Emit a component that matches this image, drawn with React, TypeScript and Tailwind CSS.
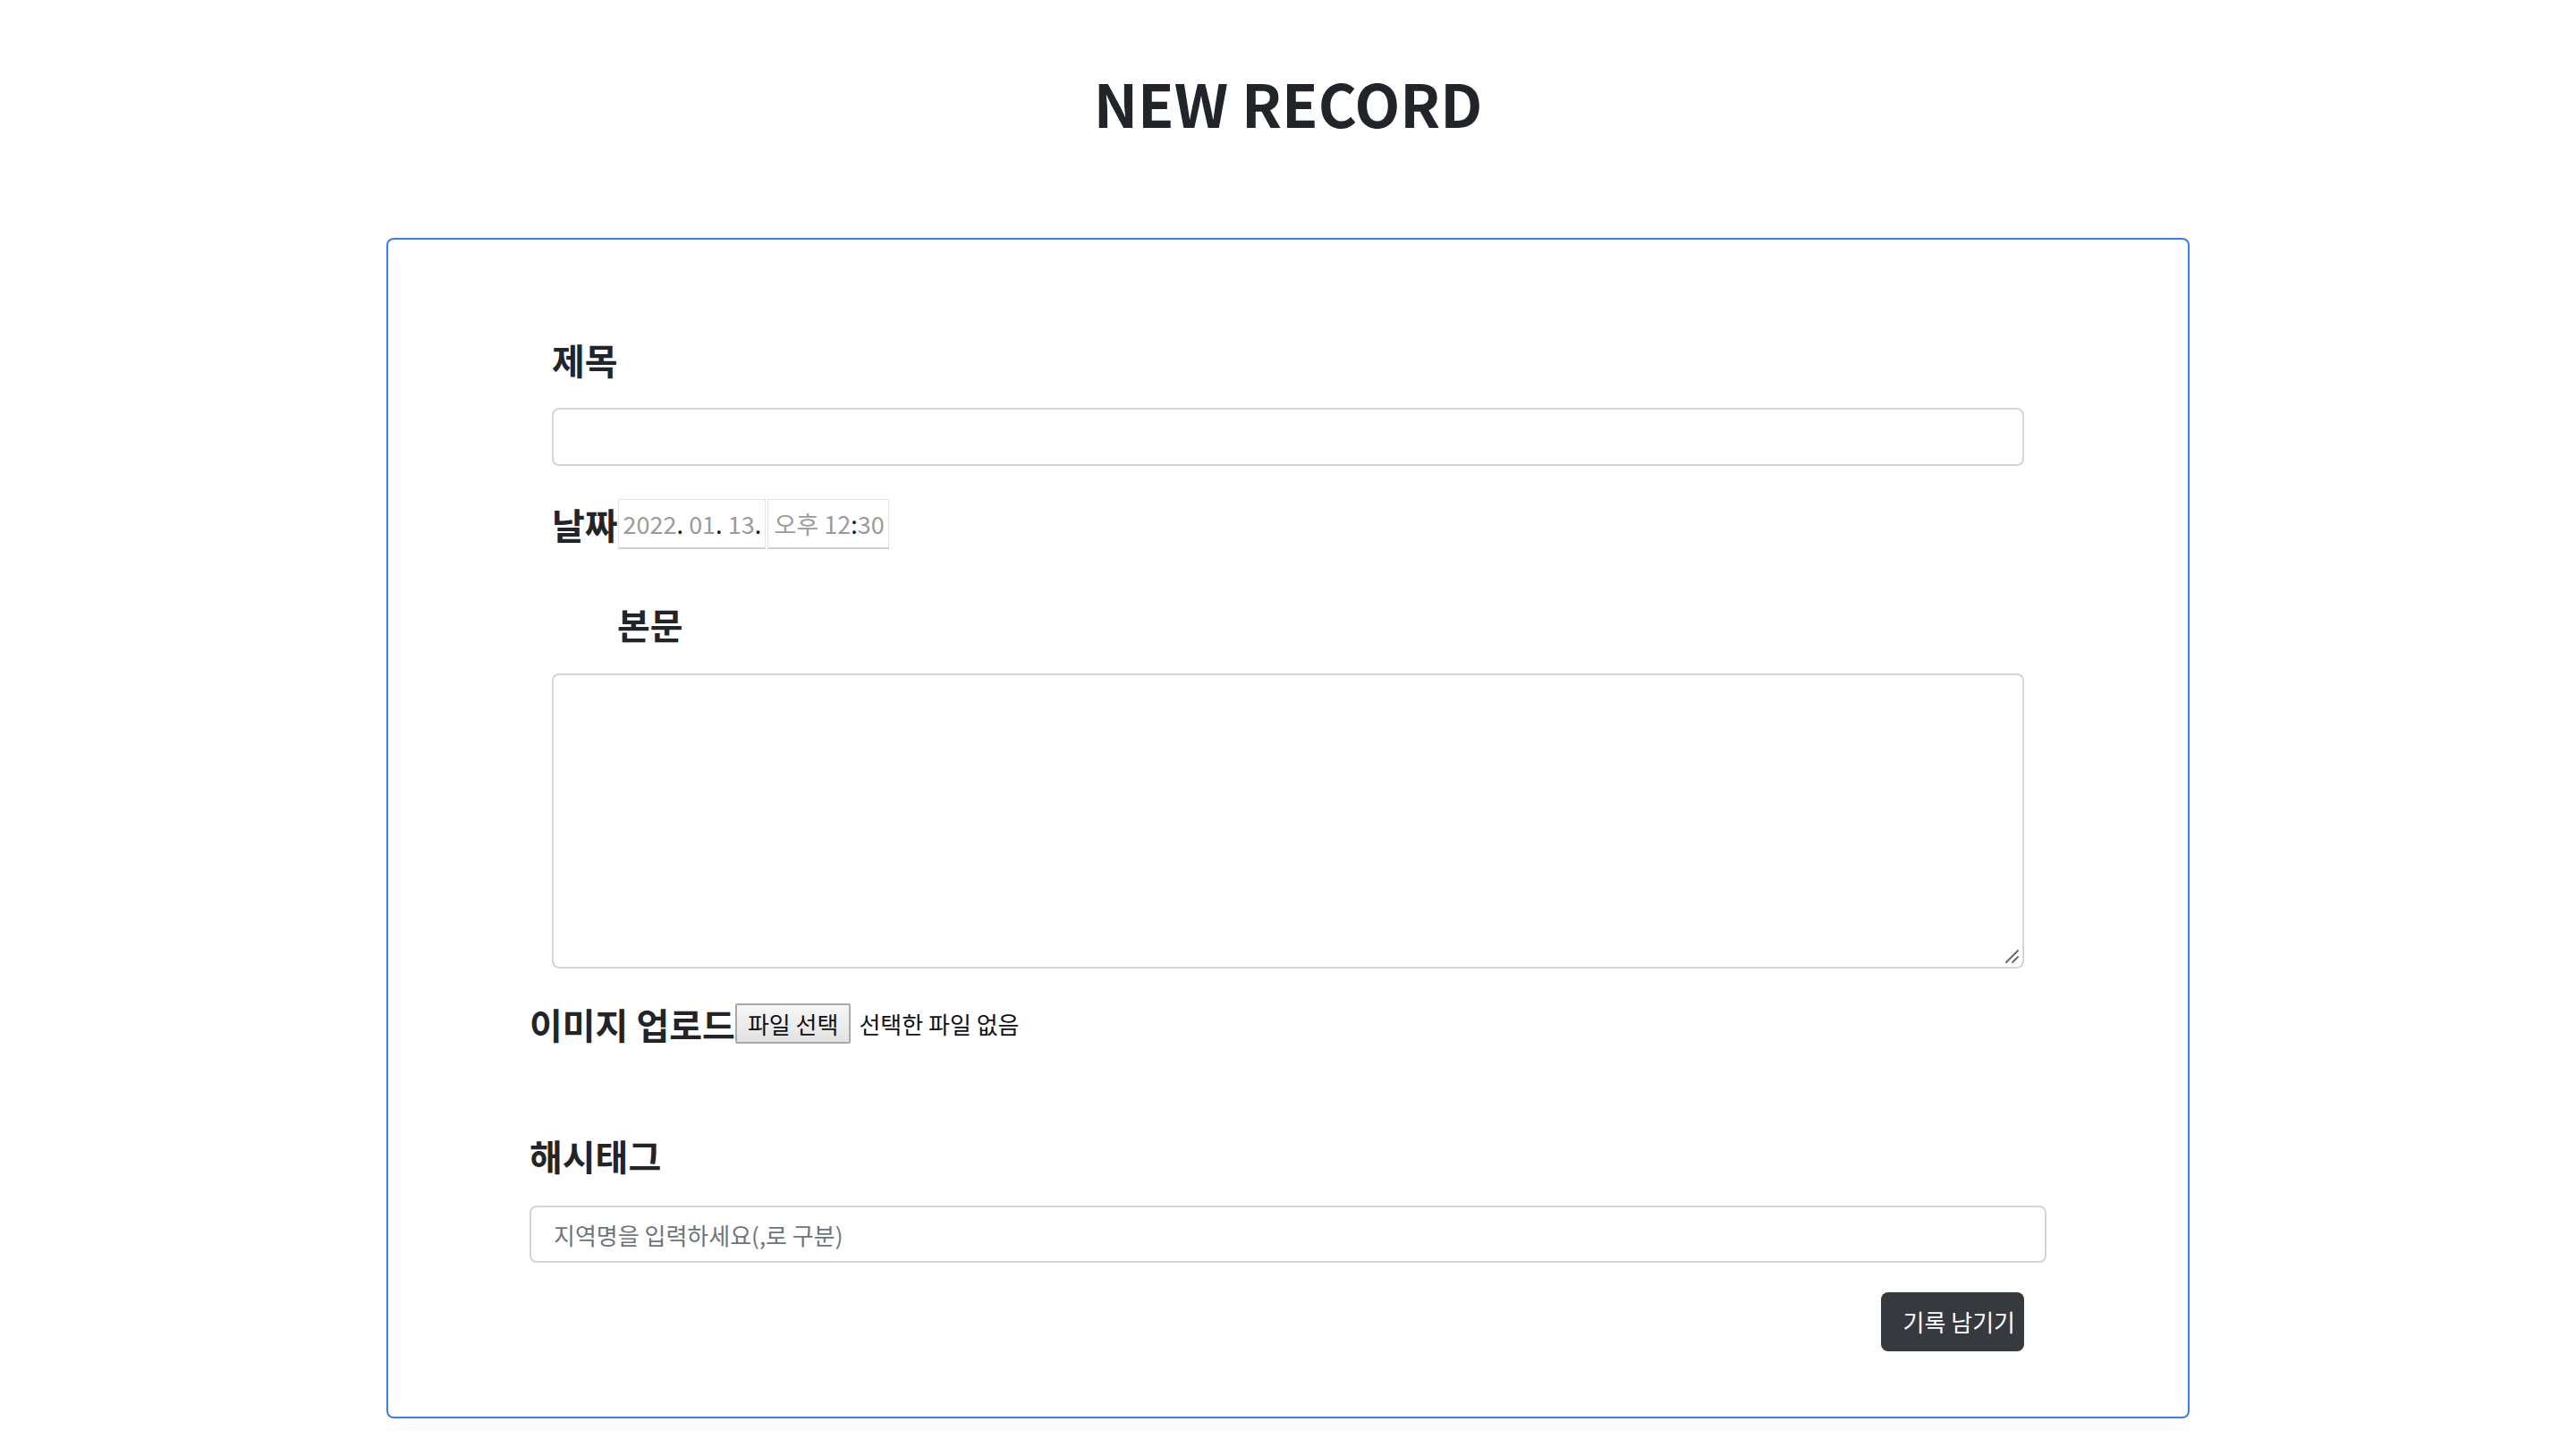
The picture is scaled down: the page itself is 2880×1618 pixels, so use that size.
export default function App() {
  return (
    <div className="min-h-screen bg-white font-['Noto_Sans_CJK_KR','Noto_Sans',sans-serif] text-[#212529]">
      <div className="pt-[81px] text-center">
        <h1 className="text-[66px] font-bold leading-none">NEW RECORD</h1>
      </div>
      <div className="mx-auto mt-[119px] w-[2016px] rounded-[8px] border-2 border-[#3b7cf3] px-[183px] pt-[114px] pb-[73px]">
        <div className="text-[40px] font-bold leading-none">제목</div>
        <input
          type="text"
          className="mt-[34px] block h-[65px] w-full rounded-[8px] border-2 border-[#d2d6db] bg-white px-[24px] text-[26px] outline-none"
        />
        <div className="mt-[37px] flex items-center">
          <span className="text-[40px] font-bold leading-none">날짜</span>
          <div className="flex gap-[2px]">
            <div className="flex h-[56px] w-[165px] items-center border border-[#e4e4e4] border-b-2 border-b-[#cfcfcf] pl-[5px] text-[27px] leading-none text-[#9b9b9b]">
              <span>2022</span>
              <span className="text-[#111]">.</span>
              <span>&nbsp;01</span>
              <span className="text-[#111]">.</span>
              <span>&nbsp;13</span>
              <span className="text-[#111]">.</span>
            </div>
            <div className="flex h-[56px] w-[136px] items-center border border-[#e4e4e4] border-b-2 border-b-[#cfcfcf] pl-[7px] text-[27px] leading-none text-[#9b9b9b]">
              <span>오후&nbsp;12</span>
              <span className="text-[#111]">:</span>
              <span>30</span>
            </div>
          </div>
        </div>
        <div className="mt-[64px] pl-[73px] text-[40px] font-bold leading-none">본문</div>
        <div className="relative mt-[35px] h-[330px] rounded-[8px] border-2 border-[#d2d6db] bg-white">
          <svg
            className="absolute right-[3px] bottom-[3px]"
            width="18"
            height="18"
            viewBox="0 0 18 18"
          >
            <line x1="3" y1="16" x2="16" y2="3" stroke="#6a6a6a" strokeWidth="2" strokeLinecap="round" />
            <line x1="10" y1="16" x2="16" y2="10" stroke="#6a6a6a" strokeWidth="2" strokeLinecap="round" />
          </svg>
        </div>
        <div className="-mx-[25px] mt-[39px] flex items-center">
          <span className="text-[40px] font-bold leading-none">이미지 업로드</span>
          <div className="flex h-[45px] items-center rounded-[2px] border-2 border-[#aaaaaa] bg-gradient-to-b from-[#f7f7f7] to-[#e2e2e2] px-[12px] text-[26px] leading-none text-[#111]">
            파일 선택
          </div>
          <span className="ml-[9px] text-[26px] leading-none text-[#111]">선택한 파일 없음</span>
        </div>
        <div className="-mx-[25px] mt-[105px]">
          <div className="text-[40px] font-bold leading-none">해시태그</div>
          <input
            type="text"
            placeholder="지역명을 입력하세요(,로 구분)"
            className="mt-[36px] block h-[64px] w-full rounded-[8px] border-2 border-[#d2d6db] bg-white px-[25px] text-[26px] text-[#212529] outline-none placeholder:text-[#6c757d]"
          />
        </div>
        <div className="mt-[33px] flex justify-end">
          <button className="flex h-[66px] w-[160px] items-center justify-end rounded-[8px] bg-[#363a3f] pr-[10px] text-[26px] leading-none text-white">
            기록 남기기
          </button>
        </div>
      </div>
    </div>
  );
}
